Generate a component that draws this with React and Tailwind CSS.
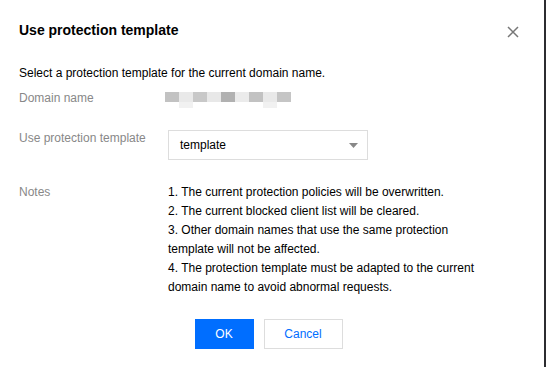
const blocks = [
  { c: "bg-[#c2c2c2]", tail: false },
  { c: "bg-[#e9e9e9]", tail: true },
  { c: "bg-[#c8c8c8]", tail: false },
  { c: "bg-[#e8e8e8]", tail: false },
  { c: "bg-[#b1b1b1]", tail: false },
  { c: "bg-[#ebebeb]", tail: false },
  { c: "bg-[#c2c2c2]", tail: false },
  { c: "bg-[#e9e9e9]", tail: true },
  { c: "bg-[#c5c5c5]", tail: false },
];

export default function App() {
  return (
    <div className="w-[546px] h-[367px] bg-white flex font-['Liberation_Sans',Arial,sans-serif]">
      <div className="flex-1 pl-[19px] pr-5 pt-[21px]">
        {/* HEADER */}
        <div className="flex items-center justify-between h-[18px]">
          <h1 className="text-[14px] leading-[18px] font-bold text-black">Use protection template</h1>
          <button className="mr-[5px] mt-[3px]">
            <svg width="12" height="12" viewBox="0 0 12 12">
              <path d="M1 1l10 10M11 1L1 11" stroke="#777" strokeWidth="1.5" fill="none" />
            </svg>
          </button>
        </div>

        <p className="mt-[25px] text-[12px] leading-[18px] text-[#000]">
          Select a protection template for the current domain name.
        </p>

        {/* DOMAIN */}
        <div className="mt-[7px] flex items-start text-[12px] leading-[18px]">
          <div className="w-[146px] text-[#888]">Domain name</div>
          <div className="flex mt-[3px]">
            {blocks.map((b, i) => (
              <div key={i} className="flex flex-col w-[14px]">
                <div className={`h-[10px] ${b.c}`}></div>
                {b.tail && <div className="h-[6px] bg-[#f1f1f1]"></div>}
              </div>
            ))}
          </div>
        </div>

        {/* TEMPLATE SELECT */}
        <div className="mt-[20px] flex items-start text-[12px] leading-[18px]">
          <div className="w-[149px] text-[#888] pt-[1px]">Use protection template</div>
          <div className="mt-[2px] w-[200px] h-[30px] border border-[#ddd] flex items-center justify-between pl-[11px] pr-[9px] text-black">
            <span>template</span>
            <svg width="9" height="5" viewBox="0 0 9 5">
              <path d="M0 0h9L4.5 5z" fill="#888" />
            </svg>
          </div>
        </div>

        {/* NOTES */}
        <div className="mt-[23px] flex items-start text-[12px] leading-[19px]">
          <div className="w-[149px] text-[#888]">Notes</div>
          <ul className="w-[322px] text-[#000]">
            <li>1. The current protection policies will be overwritten.</li>
            <li>2. The current blocked client list will be cleared.</li>
            <li>3. Other domain names that use the same protection template will not be affected.</li>
            <li>4. The protection template must be adapted to the current domain name to avoid abnormal requests.</li>
          </ul>
        </div>

        {/* ACTIONS */}
        <div className="mt-[22px] flex justify-center gap-[10px] pr-[6px] text-[12px]">
          <button className="w-[59px] h-[30px] bg-[#006eff] text-white">OK</button>
          <button className="w-[79px] h-[30px] border border-[#ddd] text-[#006eff] bg-white">Cancel</button>
        </div>
      </div>
      <div className="w-[2px] bg-[#2c2c30]"></div>
    </div>
  );
}
